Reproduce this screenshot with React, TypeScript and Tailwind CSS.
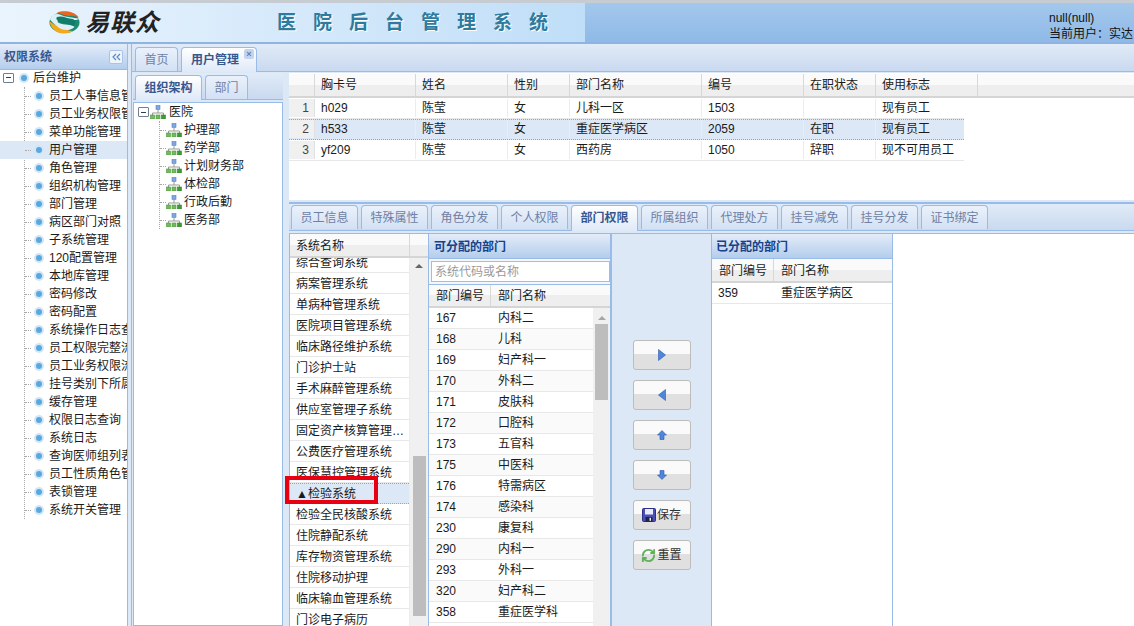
import { RefreshCw } from "lucide-react";

const FONT = "font-['Liberation_Sans','Noto_Sans_CJK_SC',sans-serif]";

const menuItems = [
  "员工人事信息管理",
  "员工业务权限管理",
  "菜单功能管理",
  "用户管理",
  "角色管理",
  "组织机构管理",
  "部门管理",
  "病区部门对照",
  "子系统管理",
  "120配置管理",
  "本地库管理",
  "密码修改",
  "密码配置",
  "系统操作日志查询",
  "员工权限完整流程",
  "员工业务权限流程",
  "挂号类别下所属科室",
  "缓存管理",
  "权限日志查询",
  "系统日志",
  "查询医师组列表",
  "员工性质角色管理",
  "表锁管理",
  "系统开关管理",
];

const orgItems = ["护理部", "药学部", "计划财务部", "体检部", "行政后勤", "医务部"];

const users = [
  ["h029", "陈莹", "女", "儿科一区", "1503", "", "现有员工"],
  ["h533", "陈莹", "女", "重症医学病区", "2059", "在职", "现有员工"],
  ["yf209", "陈莹", "女", "西药房", "1050", "辞职", "现不可用员工"],
];

const userCols = [
  { title: "胸卡号", w: "w-[101px]" },
  { title: "姓名", w: "w-[92px]" },
  { title: "性别", w: "w-[62px]" },
  { title: "部门名称", w: "w-[132px]" },
  { title: "编号", w: "w-[102px]" },
  { title: "在职状态", w: "w-[72px]" },
  { title: "使用标志", w: "w-[102px]" },
];

const detailTabs = ["员工信息", "特殊属性", "角色分发", "个人权限", "部门权限", "所属组织", "代理处方", "挂号减免", "挂号分发", "证书绑定"];

const systems = [
  "综合查询系统",
  "病案管理系统",
  "单病种管理系统",
  "医院项目管理系统",
  "临床路径维护系统",
  "门诊护士站",
  "手术麻醉管理系统",
  "供应室管理子系统",
  "固定资产核算管理系统",
  "公费医疗管理系统",
  "医保慧控管理系统",
  "▲检验系统",
  "检验全民核酸系统",
  "住院静配系统",
  "库存物资管理系统",
  "住院移动护理",
  "临床输血管理系统",
  "门诊电子病历",
];

const depts = [
  ["167", "内科二"],
  ["168", "儿科"],
  ["169", "妇产科一"],
  ["170", "外科二"],
  ["171", "皮肤科"],
  ["172", "口腔科"],
  ["173", "五官科"],
  ["175", "中医科"],
  ["176", "特需病区"],
  ["174", "感染科"],
  ["230", "康复科"],
  ["290", "内科一"],
  ["293", "外科一"],
  ["320", "妇产科二"],
  ["358", "重症医学科"],
];

function Bullet() {
  return (
    <span className="flex h-[10px] w-[10px] shrink-0 items-center justify-center rounded-full bg-[#d3e6f7]">
      <span className="h-[6px] w-[6px] rounded-full bg-[#58a9de]" />
    </span>
  );
}

function MinusBox() {
  return (
    <span className="flex h-[10px] w-[11px] shrink-0 items-center justify-center rounded-[1px] border border-[#6f7f90] bg-white">
      <span className="h-px w-[5px] bg-[#2c3e50]" />
    </span>
  );
}

function OrgIcon() {
  return (
    <svg width="16" height="14" viewBox="0 0 16 14" className="shrink-0">
      <path d="M8 5V8M2.5 10V8H13.5V10" stroke="#9a9a9a" fill="none" />
      <rect x="6" y="0.5" width="4" height="4" fill="#7fa6e0" stroke="#5a82c4" strokeWidth="0.6" />
      <rect x="0.5" y="10" width="4" height="4" fill="#74b95f" stroke="#4b9a3d" strokeWidth="0.6" />
      <rect x="6" y="10" width="4" height="4" fill="#74b95f" stroke="#4b9a3d" strokeWidth="0.6" />
      <rect x="11.5" y="10" width="4" height="4" fill="#3f9a35" stroke="#2f8528" strokeWidth="0.6" />
    </svg>
  );
}

function Logo() {
  return (
    <svg width="31" height="23" viewBox="0 0 31 23" className="shrink-0">
      <ellipse cx="15.5" cy="11.5" rx="15" ry="10.5" fill="#1c8a72" />
      <path d="M8 1.5C14 -1 25 -0.5 30 6.5C27 5.5 24 4.5 20 5C15 4 11 3 8 1.5Z" fill="#e9661f" />
      <path d="M0.5 10C1 16 6 22.5 15 22.5C19 22.5 22 21.5 24 20C18 19.5 14 18 10 15.5C6 14 2.5 12 0.5 10Z" fill="#f3a81d" />
      <path d="M1 8.5C3 3 8 2 12 4C17 6.5 24 6 30.5 8C27 9.5 23 9 18 9C12 8.5 6 9.5 10 12C15 14.5 23 13 25.5 16C20 21 13 19 9 16C6 14 3 11 1 8.5Z" fill="#e9f4fc" opacity="0.95" />
      <path d="M8 6C13 4 18 7.5 24 8C27 10 27 12 24.5 15C20 12.5 14 13 10.5 11C8 9.5 6.5 7.5 8 6Z" fill="#0f7d69" />
    </svg>
  );
}

function Header() {
  return (
    <header className="flex h-[44px] shrink-0 border-t-[3px] border-b-2 border-t-[#c6ccd2] border-b-[#8fb4e2] bg-gradient-to-b from-[#a3c8ec] to-[#8fb9e7]">
      <div className="flex h-full w-[585px] shrink-0 items-center bg-gradient-to-r from-[#eaf4fd] to-[#c0def8] pl-[49px]">
        <Logo />
        <span className="ml-[5px] w-[75px] text-[24px] leading-none font-bold tracking-[1px] whitespace-nowrap text-[#222222] italic">
          易联众
        </span>
        <span className="ml-[117px] text-[19px] leading-none font-bold tracking-[17px] whitespace-nowrap text-[#2d7b9e] [text-shadow:1px_1px_0_#ffffff]">
          医院后台管理系统
        </span>
      </div>
      <div className="flex-1" />
      <div className="flex w-[85px] shrink-0 flex-col overflow-hidden pt-[7px] text-[12px] leading-[16px] whitespace-nowrap text-[#111111]">
        <span>null(null)</span>
        <span>当前用户：实达</span>
      </div>
    </header>
  );
}

function SidePanel() {
  return (
    <aside className="flex w-[127px] shrink-0 flex-col overflow-hidden bg-white">
      <div className="flex h-[26px] shrink-0 items-center justify-between border-b border-[#99bbe8] bg-gradient-to-b from-[#e3ecf9] to-[#b4cdec] pr-[4px] pl-[4px]">
        <span className="text-[12px] font-bold text-[#37578f]">权限系统</span>
        <span className="flex h-[14px] w-[14px] items-center justify-center rounded-[2px] border border-[#a9c4e8] bg-[#eef4fc] text-[#5f86bc]">
          <svg width="9" height="8" viewBox="0 0 9 8" fill="none" stroke="currentColor" strokeWidth="1.2">
            <path d="M4 1L1 4L4 7M8 1L5 4L8 7" />
          </svg>
        </span>
      </div>
      <div>
        <div className="flex h-[17px] items-center pb-[2px] pl-[3px] text-[12px] whitespace-nowrap text-[#1a1a1a]">
          <MinusBox />
          <span className="ml-[5px]">
            <Bullet />
          </span>
          <span className="ml-[4px]">后台维护</span>
        </div>
        <div className="ml-[24px] border-l border-dotted border-[#a8a8a8]">
          {menuItems.map((item) => (
            <div
              key={item}
              className={`-ml-[25px] flex h-[18px] items-center pl-[25px] text-[12px] whitespace-nowrap text-[#1a1a1a] ${
                item === "用户管理" ? "bg-[#dde8f7]" : ""
              }`}
            >
              <span className="w-[6px] shrink-0 border-t border-dotted border-[#a8a8a8]" />
              <span className="ml-[3px]">
                <Bullet />
              </span>
              <span className="ml-[5px]">{item}</span>
            </div>
          ))}
        </div>
      </div>
    </aside>
  );
}

function OrgPanel() {
  return (
    <section className="flex w-[150px] shrink-0 flex-col">
      <div className="flex h-[27px] shrink-0 items-end gap-[3px] border-b border-[#99bbe8] bg-gradient-to-b from-[#e1ebf8] to-[#c9d9ef] pl-[2px]">
        <div className="-mb-px flex h-[25px] w-[67px] items-center justify-center rounded-t-[4px] border border-b-0 border-[#99bbe8] bg-gradient-to-b from-white to-[#dfe9f8] text-[12px] font-bold text-[#37578f]">
          组织架构
        </div>
        <div className="flex h-[24px] w-[43px] items-center justify-center rounded-t-[4px] border border-b-0 border-[#99bbe8] bg-gradient-to-b from-[#eaf1fb] to-[#d3e1f4] text-[12px] text-[#6f80a3]">
          部门
        </div>
      </div>
      <div className="mt-[2px] flex-1 border border-[#99bbe8] bg-white">
        <div className="flex h-[18px] items-center pl-[4px] text-[12px] text-[#1a1a1a]">
          <MinusBox />
          <span className="ml-[1px]">
            <OrgIcon />
          </span>
          <span className="ml-[3px]">医院</span>
        </div>
        <div className="ml-[25px] border-l border-dotted border-[#a8a8a8]">
          {orgItems.map((item) => (
            <div key={item} className="flex h-[18px] items-center text-[12px] text-[#1a1a1a]">
              <span className="w-[6px] shrink-0 border-t border-dotted border-[#a8a8a8]" />
              <OrgIcon />
              <span className="ml-[2px] whitespace-nowrap">{item}</span>
            </div>
          ))}
        </div>
      </div>
    </section>
  );
}

function HeadCell({ className = "", children }: { className?: string; children?: React.ReactNode }) {
  return (
    <div
      className={`flex h-full shrink-0 items-center border-r border-[#d8d8d8] text-[12px] text-[#1a1a1a] ${className}`}
    >
      {children}
    </div>
  );
}

const headBar =
  "flex shrink-0 border-b-2 border-[#d5d5d5] bg-gradient-to-b from-[#fafafa] from-50% to-[#eeeeee] to-50%";

function UserGrid() {
  return (
    <div className="h-[127px] shrink-0 overflow-hidden bg-white">
      <div className={`${headBar} mt-px h-[24px]`}>
        <HeadCell className="w-[26px]" />
        {userCols.map((col) => (
          <HeadCell key={col.title} className={`${col.w} pl-[6px]`}>
            {col.title}
          </HeadCell>
        ))}
      </div>
      {users.map((row, i) => (
        <div
          key={row[0]}
          className={`flex h-[21px] w-[675px] border-y pb-px ${
            i === 1 ? "border-dotted border-[#8ea6cc] bg-[#dde8f7]" : "border-t-transparent border-b-[#e8e8e8]"
          }`}
        >
          <div className="flex w-[26px] shrink-0 items-center justify-end border-r border-[#e0e0e0] bg-[#f0f0f0] pr-[5px] text-[12px] text-[#444444]">
            {i + 1}
          </div>
          {row.map((value, c) => (
            <div
              key={userCols[c].title}
              className={`flex shrink-0 items-center border-r border-[#ececec] pl-[6px] text-[12px] whitespace-nowrap text-[#1a1a1a] ${
                c === 6 ? "w-[87px] border-r-0" : userCols[c].w
              }`}
            >
              {value}
            </div>
          ))}
        </div>
      ))}
    </div>
  );
}

function DetailTabs() {
  return (
    <div className="flex h-[29px] shrink-0 items-end gap-[3px] border-t-2 border-b border-[#99bbe8] bg-gradient-to-b from-[#e1ebf8] to-[#c9d9ef] pb-px pl-[2px]">
      {detailTabs.map((tab) =>
        tab === "部门权限" ? (
          <div
            key={tab}
            className="-mb-[2px] flex h-[26px] w-[67px] items-center justify-center rounded-t-[4px] border border-b-0 border-[#99bbe8] bg-gradient-to-b from-white to-[#dfe9f8] pb-px text-[12px] font-bold text-[#37578f]"
          >
            {tab}
          </div>
        ) : (
          <div
            key={tab}
            className="flex h-[24px] w-[67px] items-center justify-center rounded-t-[4px] border border-b-0 border-[#99bbe8] bg-gradient-to-b from-[#eaf1fb] to-[#d3e1f4] text-[12px] text-[#6f80a3]"
          >
            {tab}
          </div>
        ),
      )}
    </div>
  );
}

function SystemList() {
  return (
    <div className="flex w-[140px] shrink-0 flex-col overflow-hidden border-x border-[#99bbe8] bg-white">
      <div className={`${headBar} h-[24px] w-full`}>
        <HeadCell className="w-[120px] pt-px pl-[6px]">系统名称</HeadCell>
      </div>
      <div className="flex min-h-0 flex-1">
        <div className="relative min-h-0 w-[120px] shrink-0 overflow-hidden border-r border-[#ececec]">
          <div className="-mt-[6px]">
            {systems.map((name) => (
              <div
                key={name}
                className={`flex h-[21px] items-center border-y pl-[6px] text-[12px] whitespace-nowrap text-[#1a1a1a] ${
                  name.startsWith("▲")
                    ? "border-dotted border-[#8ea6cc] bg-[#dde8f7]"
                    : "border-t-transparent border-b-[#e8e8e8]"
                }`}
              >
                <span className="block w-[112px] truncate">{name}</span>
              </div>
            ))}
          </div>
        </div>
        <div className="flex w-[18px] flex-col items-center bg-[#f0f0f0] pt-[6px]">
          <span className="h-0 w-0 border-x-[4px] border-b-[4px] border-x-transparent border-b-[#666666]" />
          <span className="mt-[188px] h-[160px] w-[13px] shrink-0 bg-[#bdbdbd]" />
        </div>
      </div>
    </div>
  );
}

function AvailableDepts() {
  return (
    <div className="flex w-[183px] shrink-0 flex-col overflow-hidden border-r-2 border-[#99bbe8] bg-[#f0f0f0]">
      <div className="flex h-[25px] shrink-0 items-center border-b border-[#99bbe8] bg-gradient-to-b from-[#e3ecf9] to-[#b4cdec] pt-px pl-[5px] text-[12px] font-bold text-[#15428b]">
        可分配的部门
      </div>
      <div className="flex h-[26px] shrink-0 items-center border-b border-[#99bbe8] bg-[#f4f6fa] pl-[2px]">
        <div className="flex h-[21px] w-full items-center border border-[#b5b8c8] bg-white pl-[3px] text-[12px] text-[#9a9a9a]">
          系统代码或名称
        </div>
      </div>
      <div className={`${headBar} h-[23px]`}>
        <HeadCell className="w-[62px] pt-px pl-[7px]">部门编号</HeadCell>
        <span className="flex items-center pt-px pl-[7px] text-[12px] text-[#1a1a1a]">部门名称</span>
      </div>
      <div className="flex min-h-0 flex-1">
        <div className="w-[164px] shrink-0 bg-white">
          {depts.map(([code, name], i) => (
            <div
              key={code}
              className={`flex h-[21px] items-center border-b border-[#e8e8e8] text-[12px] text-[#1a1a1a] ${
                i % 2 === 1 ? "bg-[#fafafa]" : ""
              }`}
            >
              <span className="w-[69px] shrink-0 pl-[7px]">{code}</span>
              <span>{name}</span>
            </div>
          ))}
        </div>
        <div className="flex flex-1 flex-col items-center pt-[8px]">
          <span className="h-0 w-0 border-x-[4px] border-b-[4px] border-x-transparent border-b-[#a6a6a6]" />
          <span className="mt-[4px] h-[76px] w-[13px] bg-[#bdbdbd]" />
        </div>
      </div>
    </div>
  );
}

function MoveButton({ children }: { children: React.ReactNode }) {
  return (
    <button className="flex h-[30px] w-[58px] items-center justify-center rounded-[3px] border border-[#bcbcbc] bg-gradient-to-b from-[#fafafa] from-45% to-[#e0e0e0] to-45% text-[12px] text-[#333333]">
      {children}
    </button>
  );
}

function ActionColumn() {
  return (
    <div className="flex w-[99px] shrink-0 flex-col items-center gap-[10px] bg-[#dde8f7] pt-[106px]">
      <MoveButton>
        <svg width="8" height="12" viewBox="0 0 8 12">
          <path d="M0.5 0.5L7.5 6L0.5 11.5Z" fill="#4f86d9" stroke="#2a5bb0" strokeWidth="0.6" />
        </svg>
      </MoveButton>
      <MoveButton>
        <svg width="8" height="12" viewBox="0 0 8 12">
          <path d="M7.5 0.5L0.5 6L7.5 11.5Z" fill="#4f86d9" stroke="#2a5bb0" strokeWidth="0.6" />
        </svg>
      </MoveButton>
      <MoveButton>
        <svg width="10" height="10" viewBox="0 0 10 10">
          <path d="M5 0.5L9.5 5H7V9.5H3V5H0.5Z" fill="#4f86d9" stroke="#2a5bb0" strokeWidth="0.6" />
        </svg>
      </MoveButton>
      <MoveButton>
        <svg width="10" height="10" viewBox="0 0 10 10">
          <path d="M5 9.5L9.5 5H7V0.5H3V5H0.5Z" fill="#4f86d9" stroke="#2a5bb0" strokeWidth="0.6" />
        </svg>
      </MoveButton>
      <MoveButton>
        <svg width="14" height="14" viewBox="0 0 14 14" className="mr-[1px]">
          <rect x="0.5" y="0.5" width="13" height="13" rx="1" fill="#4a4fb5" stroke="#2b2f85" />
          <rect x="3" y="1" width="8" height="5.5" fill="#e8ecf8" />
          <rect x="3.5" y="9" width="7" height="4.5" fill="#222244" />
          <rect x="7.5" y="9.8" width="1.5" height="3" fill="#e8ecf8" />
        </svg>
        保存
      </MoveButton>
      <MoveButton>
        <RefreshCw size={15} strokeWidth={3} className="mr-[1px] text-[#62b05a]" />
        重置
      </MoveButton>
    </div>
  );
}

function AssignedDepts() {
  return (
    <div className="flex w-[182px] shrink-0 flex-col border-x border-[#99bbe8] bg-white">
      <div className="flex h-[25px] shrink-0 items-center border-b border-[#99bbe8] bg-gradient-to-b from-[#e3ecf9] to-[#b4cdec] pt-px pl-[4px] text-[12px] font-bold text-[#15428b]">
        已分配的部门
      </div>
      <div className={`${headBar} h-[24px]`}>
        <HeadCell className="w-[62px] pt-px pl-[7px]">部门编号</HeadCell>
        <span className="flex items-center pt-px pl-[7px] text-[12px] text-[#1a1a1a]">部门名称</span>
      </div>
      <div className="flex h-[21px] items-center border-b border-[#e8e8e8] text-[12px] text-[#1a1a1a]">
        <span className="w-[69px] shrink-0 pl-[6px]">359</span>
        <span>重症医学病区</span>
      </div>
    </div>
  );
}

export default function App() {
  return (
    <div className={`relative flex h-[626px] w-[1134px] flex-col overflow-hidden bg-white ${FONT}`}>
      <Header />
      <div className="flex min-h-0 flex-1">
        <SidePanel />
        <div className="w-[5px] shrink-0 border-x border-[#99bbe8] bg-[#dde8f7]" />
        <main className="flex min-w-0 flex-1 flex-col bg-[#dde8f7]">
          <div className="flex h-[28px] shrink-0 items-end gap-[3px] border-b border-[#99bbe8] bg-gradient-to-b from-[#e1ebf8] to-[#c9d9ef] pl-[3px]">
            <div className="flex h-[24px] w-[43px] items-center justify-center rounded-t-[4px] border border-b-0 border-[#99bbe8] bg-gradient-to-b from-[#eaf1fb] to-[#d3e1f4] text-[12px] text-[#6f80a3]">
              首页
            </div>
            <div className="relative -mb-px flex h-[25px] w-[76px] items-center rounded-t-[4px] border border-b-0 border-[#99bbe8] bg-gradient-to-b from-white to-[#dfe9f8] pl-[9px] text-[12px] font-bold text-[#37578f]">
              用户管理
              <span className="absolute top-[1px] right-[2px] flex h-[10px] w-[10px] items-center justify-center rounded-[2px] bg-[#c3d5ee] text-[9px] leading-none font-bold text-[#5f7fae]">
                ×
              </span>
            </div>
          </div>
          <div className="mt-px flex min-h-0 flex-1 pl-px">
            <OrgPanel />
            <div className="w-[6px] shrink-0" />
            <div className="flex min-w-0 flex-1 flex-col">
              <UserGrid />
              <div className="h-[2px] shrink-0" />
              <DetailTabs />
              <div className="mt-[2px] flex min-h-0 flex-1 border-t border-[#99bbe8] bg-white">
                <SystemList />
                <AvailableDepts />
                <ActionColumn />
                <AssignedDepts />
              </div>
            </div>
          </div>
        </main>
      </div>
      <div className="pointer-events-none absolute top-[476px] left-[285px] h-[28px] w-[93px] border-[4px] border-[#e60012]" />
    </div>
  );
}
